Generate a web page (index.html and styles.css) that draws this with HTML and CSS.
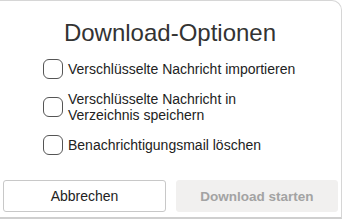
FILE: index.html
```html
<!DOCTYPE html>
<html>
<head>
    <title>Download-Optionen</title>
    <link rel="stylesheet" href="styles.css">
</head>
<body>
    <div class="dialog">
        <h1 class="title">Download-Optionen</h1>
        <div class="options">
            <label class="option"><span class="box"></span><span>Verschlüsselte Nachricht importieren</span></label>
            <label class="option"><span class="box"></span><span>Verschlüsselte Nachricht in<br>Verzeichnis speichern</span></label>
            <label class="option"><span class="box"></span><span>Benachrichtigungsmail löschen</span></label>
        </div>
        <div class="buttons">
            <button class="btn btn-cancel">Abbrechen</button>
            <button class="btn btn-start" disabled>Download starten</button>
        </div>
    </div>
</body>
</html>
```
FILE: styles.css
```css
body {
    margin: 0;
    background: #ffffff;
    font-family: "Liberation Sans", Arial, sans-serif;
}

.dialog {
    width: 344px;
    height: 219px;
    margin-left: -2px;
    border: 1px solid #d6d6d6;
    border-bottom: 2px solid #cfcfcf;
    border-radius: 0 10px 0 0;
    background: #fff;
    box-sizing: border-box;
}

.title {
    margin: 18px 0 0;
    text-align: center;
    font-size: 24px;
    font-weight: normal;
    color: #333;
    line-height: 28px;
}

.options {
    margin: 12px 0 0 44px;
    display: flex;
    flex-direction: column;
    gap: 12px;
}

.option {
    display: flex;
    align-items: center;
    gap: 5px;
    font-size: 14px;
    line-height: 16px;
    color: #222;
}

.box {
    width: 18px;
    height: 18px;
    flex: none;
    border: 1px solid #555;
    border-radius: 6px;
}

.buttons {
    display: flex;
    gap: 10px;
    margin: 25px 0 0 4px;
}

.btn {
    width: 163px;
    height: 32px;
    border-radius: 3px;
    font-family: "Liberation Sans", Arial, sans-serif;
    font-size: 14px;
}

.btn-cancel {
    background: #fff;
    border: 1px solid #c8c8c8;
    color: #222;
}

.btn-start {
    width: 162px;
    background: #f1f0ef;
    border: 1px solid #f1f0ef;
    color: #a3a3a3;
    font-size: 13.5px;
    font-weight: bold;
}
```
